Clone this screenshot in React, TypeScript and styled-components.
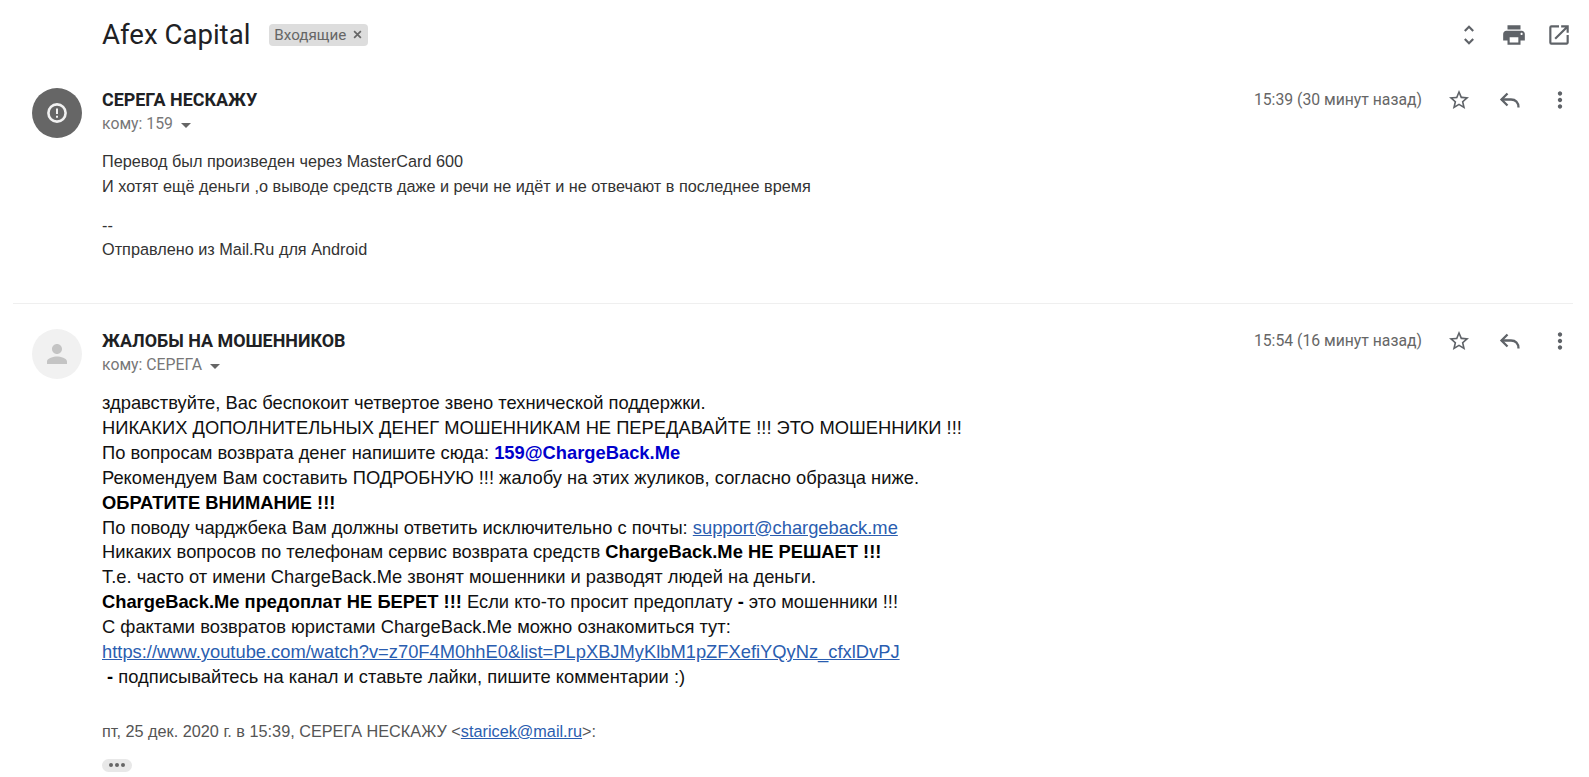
import React from "react";
import styled, { createGlobalStyle } from "styled-components";

const Global = createGlobalStyle`
  html, body { margin: 0; padding: 0; background: #fff; }
  body { font-family: "Liberation Sans", Arial, sans-serif; overflow: hidden; }
  * { box-sizing: border-box; }
`;

const Page = styled.div`
  width: 1589px;
  height: 777px;
  overflow: hidden;
  display: flex;
  flex-direction: column;
`;

const Header = styled.header`
  flex: none;
  height: 69px;
  padding-left: 102px;
  padding-right: 17px;
  display: flex;
  align-items: center;
`;

const Subject = styled.h1`
  margin: 0;
  font: 400 27.6px/34px Roboto, sans-serif;
  color: #202124;
`;

const Label = styled.span`
  margin-left: 19px;
  height: 22px;
  padding: 0 6px 0 5px;
  border-radius: 4px;
  background: #dddddd;
  color: #666666;
  font: 400 15.2px/22px Roboto, sans-serif;
  display: inline-flex;
  align-items: center;
  gap: 7px;
`;

const HeaderIcons = styled.div`
  margin-left: auto;
  display: flex;
  align-items: center;
  gap: 19px;
`;

const Message = styled.article<{ $height?: number; $top: number }>`
  flex: ${(p) => (p.$height ? "none" : "1")};
  height: ${(p) => (p.$height ? `${p.$height}px` : "auto")};
  display: flex;
  padding-left: 32px;
  padding-top: ${(p) => p.$top}px;
`;

const Avatar = styled.div<{ $dark?: boolean }>`
  width: 50px;
  height: 50px;
  border-radius: 50%;
  flex: none;
  margin-right: 20px;
  display: flex;
  align-items: center;
  justify-content: center;
  background: ${(p) => (p.$dark ? "#666666" : "#f1f1f1")};
`;

const Main = styled.div`
  flex: 1;
  min-width: 0;
`;

const MetaRow = styled.div`
  display: flex;
  justify-content: space-between;
  padding-right: 16px;
`;

const Sender = styled.div`
  font: 700 17.9px/24px Roboto, "Liberation Sans", sans-serif;
  color: #202124;
`;

const Recipient = styled.div`
  font: 400 15.8px/20px Roboto, sans-serif;
  color: #777777;
  display: flex;
  align-items: center;
  margin-top: 2px;
`;

const Caret = styled.span`
  width: 0;
  height: 0;
  margin-left: 8px;
  margin-top: 2px;
  border-left: 5px solid transparent;
  border-right: 5px solid transparent;
  border-top: 5px solid #666666;
`;

const Actions = styled.div`
  display: flex;
  align-items: center;
  height: 24px;
`;

const Time = styled.span`
  font: 400 15.75px/20px Roboto, sans-serif;
  color: #666666;
  margin-right: 25px;
`;

const ActionIcons = styled.div`
  display: flex;
  gap: 25px;
  align-items: center;
`;

const StarSlot = styled.span`
  display: flex;
  margin-right: 2px;
`;

const SmallBody = styled.div`
  margin-top: 15px;
  font: 400 16.25px/24.5px "Liberation Sans", Arial, sans-serif;
  color: #333333;
`;

const Spacer = styled.div`
  height: 16px;
`;

const SignatureLine = styled.div`
  line-height: 23.5px;
`;

const LargeBody = styled.div`
  margin-top: 16px;
  font: 400 18.33px/24.9px "Liberation Sans", Arial, sans-serif;
  color: #111111;
`;

const Strong = styled.b`
  color: #000;
`;

const BlueStrong = styled.b`
  color: #0000cc;
`;

const Link = styled.a`
  color: #2a5db0;
  text-decoration: underline;
`;

const Divider = styled.hr`
  margin: 0 0 0 13px;
  width: 1560px;
  border: 0;
  border-top: 1px solid #efefef;
  flex: none;
`;

const Quote = styled.div`
  margin-top: 31px;
  font: 400 16.25px/20px "Liberation Sans", Arial, sans-serif;
  color: #555555;
`;

const Ellipsis = styled.div`
  margin-top: 18px;
  width: 30px;
  height: 13px;
  border-radius: 7px;
  background: #e8e8e8;
  display: flex;
  align-items: center;
  justify-content: center;
  gap: 2px;
`;

const Dot = styled.span`
  width: 4px;
  height: 4px;
  border-radius: 50%;
  background: #666666;
`;

const Icon = ({ d, size = 24, fill = "#5f6368" }: { d: string; size?: number; fill?: string }) => (
  <svg width={size} height={size} viewBox="0 0 24 24" fill={fill} aria-hidden="true">
    <path d={d} />
  </svg>
);

const EXPAND = "M12 5.83 15.17 9l1.41-1.41L12 3 7.41 7.59 8.83 9 12 5.83zm0 12.34L8.83 15l-1.41 1.41L12 21l4.59-4.59L15.17 15 12 18.17z";
const PRINT = "M19 8H5c-1.66 0-3 1.34-3 3v6h4v4h12v-4h4v-6c0-1.66-1.34-3-3-3zm-3 11H8v-5h8v5zm3-7c-.55 0-1-.45-1-1s.45-1 1-1 1 .45 1 1-.45 1-1 1zm-1-9H6v4h12V3z";
const OPEN = "M19 19H5V5h7V3H5a2 2 0 0 0-2 2v14a2 2 0 0 0 2 2h14c1.1 0 2-.9 2-2v-7h-2v7zM14 3v2h3.59l-9.83 9.83 1.41 1.41L19 6.41V10h2V3h-7z";
const STAR = "M22 9.24l-7.19-.62L12 2 9.19 8.63 2 9.24l5.46 4.73L5.82 21 12 17.27 18.18 21l-1.63-7.03L22 9.24zM12 15.4l-3.76 2.27 1-4.28-3.32-2.88 4.38-.38L12 6.1l1.71 4.04 4.38.38-3.32 2.88 1 4.28L12 15.4z";
const MORE = "M12 8c1.1 0 2-.9 2-2s-.9-2-2-2-2 .9-2 2 .9 2 2 2zm0 2c-1.1 0-2 .9-2 2s.9 2 2 2 2-.9 2-2-.9-2-2-2zm0 6c-1.1 0-2 .9-2 2s.9 2 2 2 2-.9 2-2-.9-2-2-2z";
const PERSON = "M12 12c2.2 0 4-1.8 4-4s-1.8-4-4-4-4 1.8-4 4 1.8 4 4 4zm0 2c-2.7 0-8 1.3-8 4v2h16v-2c0-2.7-5.3-4-8-4z";

const ReplyIcon = () => (
  <svg width={24} height={24} viewBox="0 0 24 24" fill="none" stroke="#5f6368" strokeWidth={2.3} aria-hidden="true">
    <path d="M9.5 5.5 3.5 11.5l6 6" />
    <path d="M3.5 11.5H13c4.5 0 7.5 3 7.5 8" />
  </svg>
);

const AlertIcon = () => (
  <svg width={24} height={24} viewBox="0 0 24 24" fill="none" stroke="#f1f1f1" aria-hidden="true">
    <circle cx="12" cy="12" r="8.6" strokeWidth={2.6} />
    <path d="M12 7.5v5.5" strokeWidth={2} />
    <path d="M12 14.7v2" strokeWidth={2} />
  </svg>
);

const MessageActions = ({ time }: { time: string }) => (
  <Actions>
    <Time>{time}</Time>
    <ActionIcons>
      <StarSlot>
        <Icon d={STAR} />
      </StarSlot>
      <ReplyIcon />
      <Icon d={MORE} size={26} />
    </ActionIcons>
  </Actions>
);

export default function App() {
  return (
    <Page>
      <Global />
      <Header>
        <Subject>Afex Capital</Subject>
        <Label>
          Входящие
          <svg width="9" height="9" viewBox="0 0 8 8" aria-hidden="true">
            <path d="M1 1l6 6M7 1L1 7" stroke="#666" strokeWidth="1.5" />
          </svg>
        </Label>
        <HeaderIcons>
          <Icon d={EXPAND} size={26} />
          <Icon d={PRINT} size={26} />
          <Icon d={OPEN} size={26} />
        </HeaderIcons>
      </Header>

      <Message $height={234} $top={19}>
        <Avatar $dark>
          <AlertIcon />
        </Avatar>
        <Main>
          <MetaRow>
            <div>
              <Sender>СЕРЕГА НЕСКАЖУ</Sender>
              <Recipient>
                кому: 159
                <Caret />
              </Recipient>
            </div>
            <MessageActions time="15:39 (30 минут назад)" />
          </MetaRow>
          <SmallBody>
            Перевод был произведен через MasterCard 600
            <br />
            И хотят ещё деньги ,о выводе средств даже и речи не идёт и не отвечают в последнее время
            <Spacer />
            <SignatureLine>--</SignatureLine>
            <SignatureLine>Отправлено из Mail.Ru для Android</SignatureLine>
          </SmallBody>
        </Main>
      </Message>

      <Divider />

      <Message $top={25}>
        <Avatar>
          <Icon d={PERSON} fill="#c4c4c4" size={30} />
        </Avatar>
        <Main>
          <MetaRow>
            <div>
              <Sender>ЖАЛОБЫ НА МОШЕННИКОВ</Sender>
              <Recipient>
                кому: СЕРЕГА
                <Caret />
              </Recipient>
            </div>
            <MessageActions time="15:54 (16 минут назад)" />
          </MetaRow>
          <LargeBody>
            здравствуйте, Вас беспокоит четвертое звено технической поддержки.
            <br />
            НИКАКИХ ДОПОЛНИТЕЛЬНЫХ ДЕНЕГ МОШЕННИКАМ НЕ ПЕРЕДАВАЙТЕ !!! ЭТО МОШЕННИКИ !!!
            <br />
            По вопросам возврата денег напишите сюда: <BlueStrong>159@ChargeBack.Me</BlueStrong>
            <br />
            Рекомендуем Вам составить ПОДРОБНУЮ !!! жалобу на этих жуликов, согласно образца ниже.
            <br />
            <Strong>ОБРАТИТЕ ВНИМАНИЕ !!!</Strong>
            <br />
            По поводу чарджбека Вам должны ответить исключительно с почты: <Link href="#">support@chargeback.me</Link>
            <br />
            Никаких вопросов по телефонам сервис возврата средств <Strong>ChargeBack.Me НЕ РЕШАЕТ !!!</Strong>
            <br />
            Т.е. часто от имени ChargeBack.Me звонят мошенники и разводят людей на деньги.
            <br />
            <Strong>ChargeBack.Me предоплат НЕ БЕРЕТ !!!</Strong> Если кто-то просит предоплату <Strong>-</Strong> это мошенники !!!
            <br />
            С фактами возвратов юристами ChargeBack.Me можно ознакомиться тут:
            <br />
            <Link href="#">https://www.youtube.com/watch?v=z70F4M0hhE0&amp;list=PLpXBJMyKlbM1pZFXefiYQyNz_cfxlDvPJ</Link>
            <br />
            &nbsp;<Strong>-</Strong> подписывайтесь на канал и ставьте лайки, пишите комментарии :)
          </LargeBody>
          <Quote>
            пт, 25 дек. 2020 г. в 15:39, СЕРЕГА НЕСКАЖУ &lt;<Link href="#">staricek@mail.ru</Link>&gt;:
          </Quote>
          <Ellipsis>
            <Dot />
            <Dot />
            <Dot />
          </Ellipsis>
        </Main>
      </Message>
    </Page>
  );
}
